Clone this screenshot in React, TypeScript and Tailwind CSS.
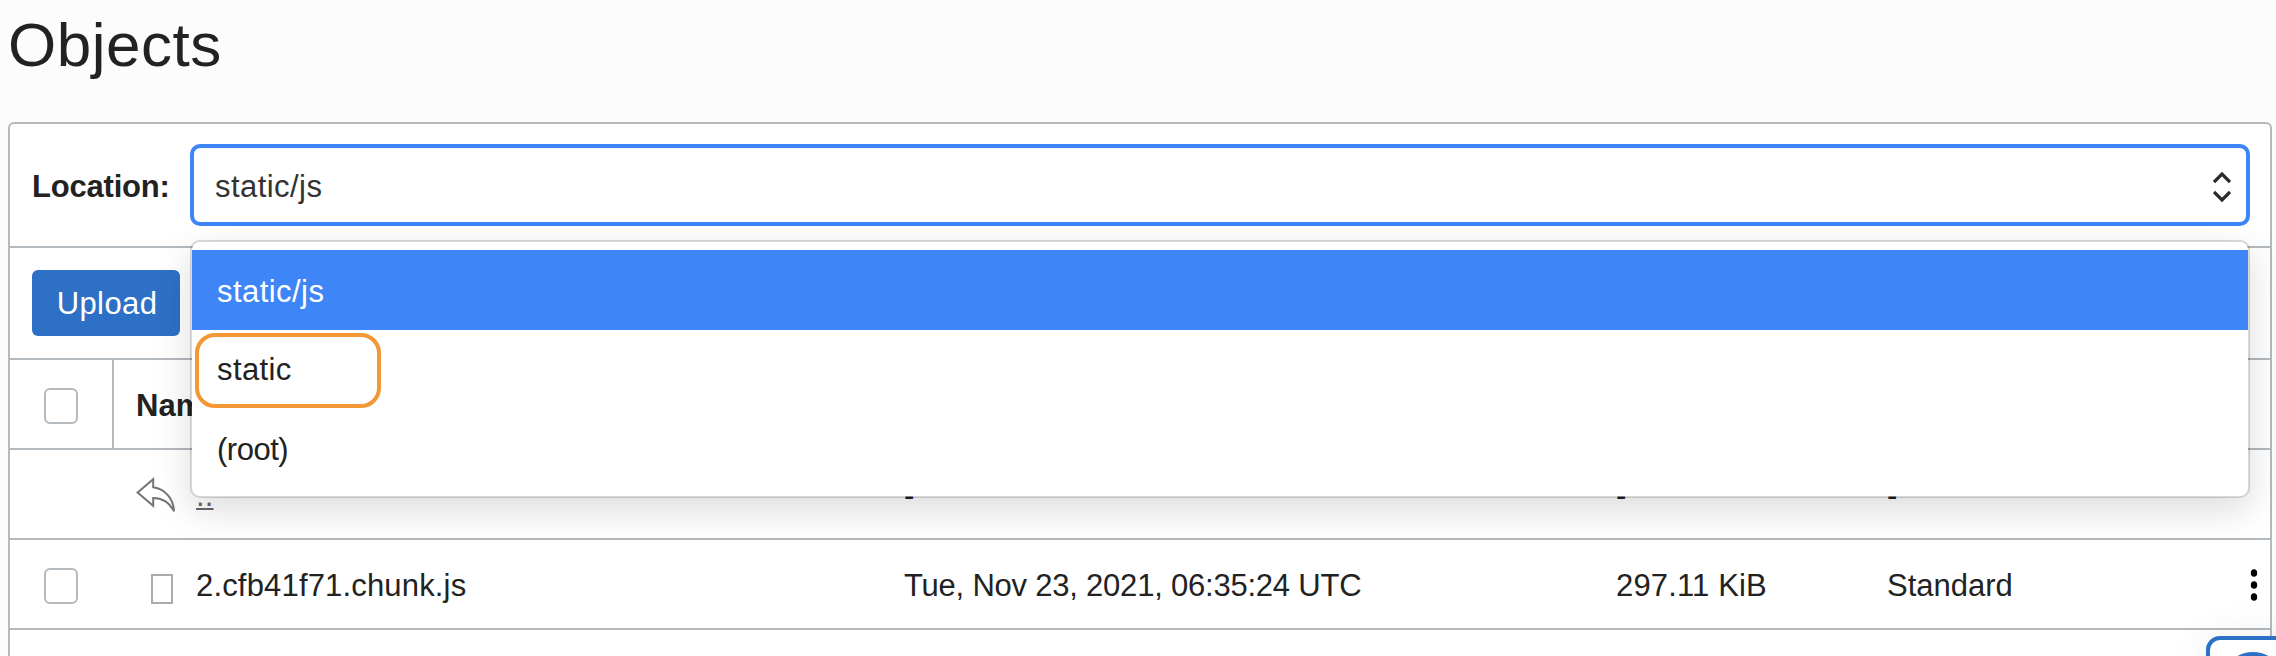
import React from "react";

const LINE = "border-[#b4b9be]";

function Checkbox() {
  return <span className="block h-9 w-[34px] rounded-[6px] border-2 border-[#b4b9be] bg-white" />;
}

function ReplyArrow() {
  return (
    <svg width="40" height="38" viewBox="0 0 40 38" fill="none" stroke="#757575" strokeWidth="2">
      <path d="M1.6 15.4 17.2 2.2V10.2C29.5 11.9 37.6 22.1 38 34.2 33.6 25.6 27 21 17.2 20.9V28.8Z" />
    </svg>
  );
}

function Row({ icon, name, modified, size, tier, checkbox, menu }: {
  icon: React.ReactNode; name: React.ReactNode; modified: string; size: string; tier: string; checkbox?: boolean; menu?: boolean;
}) {
  return (
    <div className={`flex h-[90px] items-center border-b-2 ${LINE} pt-1`}>
      <div className="w-[104px] pl-[34px]">{checkbox && <Checkbox />}</div>
      <div className="flex w-[82px] items-center pl-[22px]">{icon}</div>
      <div className="w-[708px] tracking-[0.17px]">{name}</div>
      <div className="w-[712px] tracking-[-0.22px]">{modified}</div>
      <div className="w-[271px] tracking-[0.15px]">{size}</div>
      <div className="flex-1">{tier}</div>
      {menu && (
        <svg className="mr-3 -mt-0.5" width="8" height="34" viewBox="0 0 8 34">
          <ellipse cx="4" cy="5" rx="3.2" ry="3.8" />
          <ellipse cx="4" cy="17" rx="3.2" ry="3.8" />
          <ellipse cx="4" cy="29" rx="3.2" ry="3.8" />
        </svg>
      )}
    </div>
  );
}

function LocationMenu() {
  return (
    <div className="absolute left-[180px] top-[116px] h-[258px] w-[2060px] rounded-[10px] border-2 border-black/15 bg-white bg-clip-padding pt-2 shadow-[0_12px_36px_rgba(0,0,0,0.14)]">
      <div className="flex h-20 items-center bg-[#3e85f7] pl-[25px] pt-[3px] tracking-[0.45px] text-white">static/js</div>
      <div className="relative flex h-[78px] items-center pl-[25px] pt-[2px] tracking-[0.4px]">
        static
        <span className="absolute left-[3px] top-[3px] h-[75px] w-[186px] rounded-[20px] border-4 border-[#f29837]" />
      </div>
      <div className="flex h-20 items-center pl-[25px] pt-[3px] tracking-[-0.5px]">(root)</div>
    </div>
  );
}

export default function App() {
  return (
    <div className="relative h-[656px] w-[2276px] overflow-hidden bg-[#fcfcfc] font-['Liberation_Sans',Arial,sans-serif] text-[31px] leading-[40px] text-[#222]">
      <h1 className="h-[122px] pl-2 pt-[9px] text-[62px] leading-[72px] tracking-[0.5px]">Objects</h1>
      <section className={`relative ml-2 h-[560px] w-[2264px] rounded-[6px] border-2 ${LINE} bg-white`}>
        <div className={`flex h-[124px] items-center border-b-2 ${LINE} pl-[22px] pr-5`}>
          <label className="w-[158px] pt-[3px] font-bold tracking-[-0.2px]">Location:</label>
          <div className="flex h-[82px] flex-1 items-center justify-between rounded-[10px] border-4 border-[#3e85f7] pl-[21px] pr-[15px] text-[#333]">
            <span className="pt-[3px] tracking-[0.45px]">static/js</span>
            <svg className="mt-[3px]" width="18" height="34" viewBox="0 0 18 34" fill="none" stroke="#2b2b2b" strokeWidth="3.2">
              <path d="M1 12 9 4 17 12M1 22 9 30 17 22" />
            </svg>
          </div>
        </div>
        <div className={`flex h-28 items-center border-b-2 ${LINE} pl-[22px]`}>
          <button className="h-[66px] w-[148px] rounded-[6px] bg-[#2d70c5] pl-[2px] pt-[2px] tracking-[0.4px] text-white">Upload</button>
        </div>
        <div className={`flex h-[90px] border-b-2 ${LINE} font-bold`}>
          <div className={`flex w-[104px] items-center border-r-2 ${LINE} pl-[34px] pt-1`}><Checkbox /></div>
          <div className="flex items-center pl-[22px] pt-1">Name</div>
        </div>
        <Row icon={<ReplyArrow />} name={<span className="text-[#666] underline decoration-2 underline-offset-2">..</span>} modified="-" size="-" tier="-" />
        <Row
          checkbox
          menu
          icon={<span className="ml-[15px] mt-[5px] h-[30px] w-[22px] border-2 border-[#ababab]" />}
          name="2.cfb41f71.chunk.js"
          modified="Tue, Nov 23, 2021, 06:35:24 UTC"
          size="297.11 KiB"
          tier="Standard"
        />
        <LocationMenu />
      </section>
      <div className="absolute left-[2206px] top-[636px] h-24 w-24 rounded-[14px] border-4 border-[#2d70c5] bg-white pl-[14px] pt-3 shadow-[0_0_40px_rgba(0,0,0,0.07)]">
        <svg width="66" height="66" viewBox="0 0 66 66" fill="none" stroke="#2d70c5" strokeWidth="4">
          <circle cx="29" cy="31" r="29" />
        </svg>
      </div>
    </div>
  );
}
